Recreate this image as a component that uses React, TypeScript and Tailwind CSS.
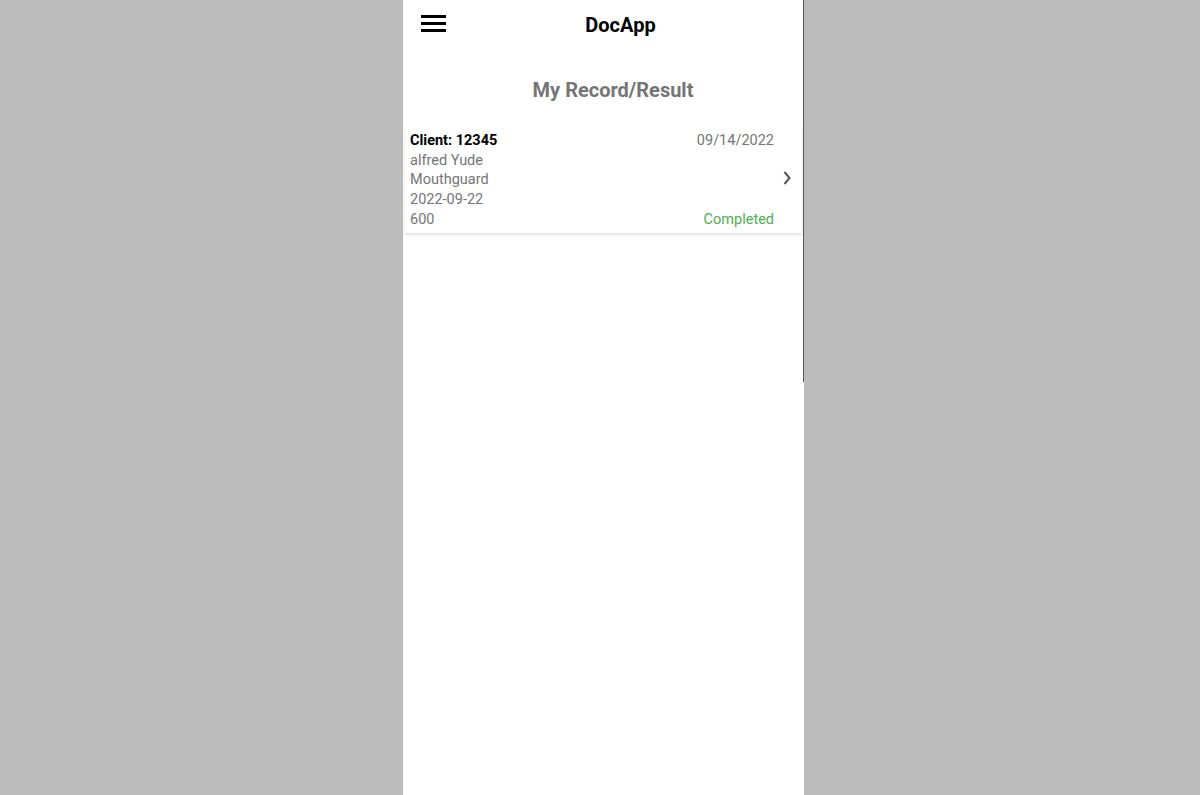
import React from "react";

export default function App() {
  return (
    <div className="w-[1200px] h-[795px] bg-[#bbbbbb] flex justify-center overflow-hidden" style={{ fontFamily: "Roboto, 'Liberation Sans', sans-serif" }}>
      <div className="relative w-[401px] h-[795px] bg-white ml-[7px] flex flex-col">
        <div className="absolute right-0 top-0 w-[1px] h-[382px] bg-[#5a5a5a]" />
        <div className="h-[52px] flex items-center relative">
          <div className="absolute left-[18px] top-[15px] flex flex-col gap-[4px]">
            <div className="w-[25px] h-[3px] bg-black" />
            <div className="w-[25px] h-[3px] bg-black" />
            <div className="w-[25px] h-[3px] bg-black" />
          </div>
          <div className="w-full text-center pl-[34px] text-[20px] font-bold text-black leading-none -mt-[2px]">DocApp</div>
        </div>
        <div className="h-[72px] flex items-center justify-center pt-[4px]">
          <div className="text-[20px] font-bold text-[#757575] leading-none pl-[19px]">My Record/Result</div>
        </div>
        <div className="mx-[2px] bg-white shadow-[0_2px_3px_rgba(0,0,0,0.12)] flex items-center pl-[5px] pr-[10px] pt-[7px] pb-[3px]">
          <div className="flex-1 flex flex-col text-[14.5px] leading-[19.7px]">
            <div className="flex justify-between pr-[18px]">
              <span className="font-bold text-black">Client: 12345</span>
              <span className="text-[#757575]">09/14/2022</span>
            </div>
            <span className="text-[#757575]">alfred Yude</span>
            <span className="text-[#757575]">Mouthguard</span>
            <span className="text-[#757575]">2022-09-22</span>
            <div className="flex justify-between pr-[18px]">
              <span className="text-[#757575]">600</span>
              <span className="text-[#4caf50]">Completed</span>
            </div>
          </div>
          <svg className="absolute left-[379px] top-[170px]" width="10" height="16" viewBox="0 0 10 16">
            <path d="M2.5 2 L7.5 8 L2.5 14" fill="none" stroke="#555" strokeWidth="2" />
          </svg>
        </div>
      </div>
    </div>
  );
}
